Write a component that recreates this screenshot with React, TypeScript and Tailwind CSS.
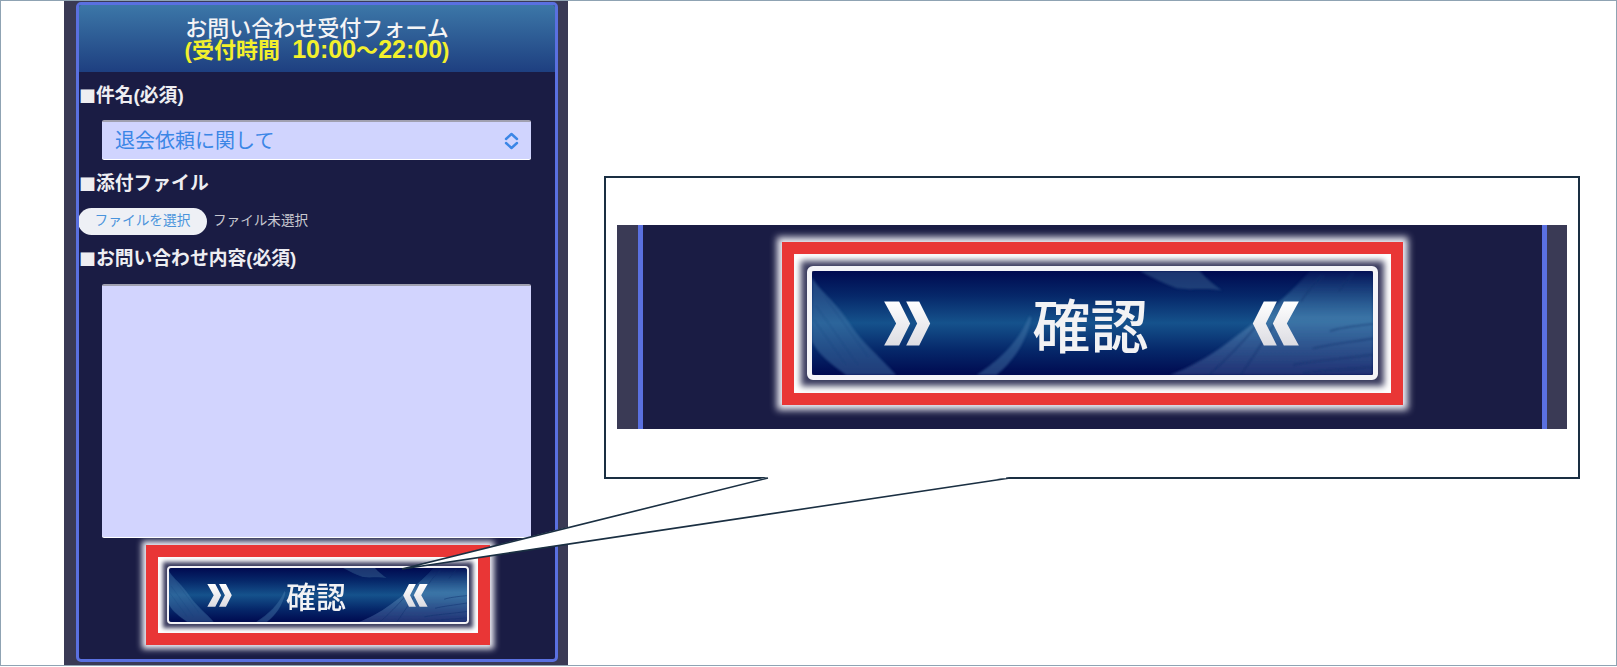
const FONT = "font-['Liberation_Sans','Noto_Sans_CJK_JP',sans-serif]";

function Feathers() {
  return (
    <svg className="absolute inset-0 h-full w-full" viewBox="0 0 560 102" preserveAspectRatio="none" aria-hidden="true">
      <defs>
        <linearGradient id="chev" x1="0" y1="0" x2="0" y2="1">
          <stop offset="0" stopColor="#ffffff" />
          <stop offset="1" stopColor="#dcdce2" />
        </linearGradient>
        <linearGradient id="plume" x1="0" y1="0" x2="0" y2="1">
          <stop offset="0" stopColor="#3f78a8" stopOpacity="0.08" />
          <stop offset="0.45" stopColor="#4d86b4" stopOpacity="0.7" />
          <stop offset="1" stopColor="#2c3f80" stopOpacity="0.75" />
        </linearGradient>
        <filter id="soft" x="-5%" y="-5%" width="110%" height="110%">
          <feGaussianBlur stdDeviation="0.8" />
        </filter>
      </defs>
      <g filter="url(#soft)">
        <path d="M0 6C8 20 24 30 38 52C50 70 70 86 84 102H34C20 92 6 82 0 69Z" fill="#4d80b0" opacity="0.42" />
        <path d="M4 34L46 92M2 48L34 92M12 24L56 84" stroke="#123f78" strokeWidth="1" opacity="0.35" fill="none" />
        <path d="M164 102C186 88 206 70 217 44L219 46C214 70 200 90 184 102Z" fill="#4d80b0" opacity="0.42" />
        <path d="M327 0H387C394 8 402 14 409 19C392 16 378 19 364 17C350 12 338 6 327 0Z" fill="#36608f" opacity="0.5" />
        <path d="M497 0C470 30 442 50 415 70C395 85 375 95 357 102H560V0Z" fill="url(#plume)" />
        <path d="M560 52C540 54 525 56 517 59M560 66C535 70 515 72 500 76M560 82C530 86 500 88 480 92M560 94C535 96 505 98 490 100M445 52C430 70 412 88 396 102M470 38C456 62 440 84 428 102M510 4C500 14 494 20 488 30M540 2C534 10 530 14 526 20" stroke="#10306c" strokeWidth="1.6" opacity="0.55" fill="none" />
      </g>
      <polygon points="72,30 87,30 98,51.5 87,73 72,73 84,51.5" fill="url(#chev)" />
      <polygon points="94,30 107,30 118,51.5 107,73 94,73 105,51.5" fill="url(#chev)" />
      <polygon points="486,30 471,30 460,51.5 471,73 486,73 474,51.5" fill="url(#chev)" />
      <polygon points="464,30 451,30 440,51.5 451,73 464,73 453,51.5" fill="url(#chev)" />
    </svg>
  );
}

function Face({ className }: { className: string }) {
  return (
    <div className={`relative flex items-center justify-center overflow-hidden rounded-[3px] bg-[linear-gradient(180deg,#000a50_0%,#06286a_24%,#15528c_50%,#06286a_76%,#000a50_100%)] font-medium text-[#f2f2f4] ${className}`}>
      <Feathers />
      <span className="relative -translate-x-[2px] font-['Noto_Sans_CJK_JP',sans-serif]">確認</span>
    </div>
  );
}

function Label({ children }: { children: string }) {
  return (
    <div className="flex items-center text-[18.8px] leading-[24px] font-bold text-[#eeeef2]">
      <span className="font-['Noto_Sans_CJK_JP',sans-serif] text-[17px] font-normal">■</span>
      <span>{children}</span>
    </div>
  );
}

function Chevrons() {
  return (
    <svg viewBox="0 0 15 20" className="h-[20px] w-[15px]" fill="none" stroke="#3b86e6" strokeWidth="2.4" strokeLinecap="round" strokeLinejoin="round" aria-hidden="true">
      <path d="M2 8L7.5 3L13 8" />
      <path d="M2 12L7.5 17L13 12" />
    </svg>
  );
}

function Panel() {
  return (
    <div className="ml-[64px] h-[664px] w-[504px] shrink-0 bg-[#3a3a55] px-[12px] pt-[1px]">
      <div className="h-[660px] w-[482px] overflow-hidden rounded-[5px] border-[3px] border-[#5a70e0] bg-[#1a1c44]">
        <div className="flex h-[67px] flex-col items-center bg-[linear-gradient(180deg,#3c77a8_0%,#1e3f80_100%)] pt-[13px] text-[22px] leading-[21px] font-medium">
          <div className="text-[#f4f4f6]">お問い合わせ受付フォーム</div>
          <div className="font-bold whitespace-pre text-[#f3f02c]">(受付時間  <span className="text-[25px]">10:00</span>～<span className="text-[25px]">22:00</span>)</div>
        </div>
        <div className="pt-[12px]">
          <Label>件名(必須)</Label>
          <div className="mt-[12px] ml-[23px] flex h-[39px] w-[429px] items-center justify-between rounded-[2px] border-t-[2px] border-[#a0a0b0] bg-[#d0d4fe] pr-[12px] pl-[13px] text-[20px] text-[#3b86e6] shadow-[0_1px_0_#fff]">
            <span>退会依頼に関して</span>
            <Chevrons />
          </div>
          <div className="mt-[13px]"><Label>添付ファイル</Label></div>
          <div className="mt-[12px] -ml-[1px] flex items-center">
            <div className="flex h-[27px] w-[129px] items-center justify-center rounded-full bg-[#eef0f5] text-[13.7px] text-[#4a94dc]">ファイルを選択</div>
            <span className="ml-[6px] text-[13.6px] text-[#c8c8d0]">ファイル未選択</span>
          </div>
          <div className="mt-[12px]"><Label>お問い合わせ内容(必須)</Label></div>
          <div className="mt-[13px] ml-[23px] h-[253px] w-[429px] rounded-[2px] border-t-[2px] border-[#a0a0b0] bg-[#d2d4fe] shadow-[0_1px_0_#fff]" />
          <div className="mt-[8px] ml-[67px] h-[100px] w-[344px] border-[12px] border-[#e93636] bg-[#3a3b5e] p-[9px] shadow-[0_0_6px_4px_#eeeef4,inset_0_0_4px_5px_#fff]">
            <div className="h-[58px] w-[302px] rounded-[4px] border-[2px] border-[#f2f2f6]">
              <Face className="h-full w-full text-[30px]" />
            </div>
          </div>
        </div>
      </div>
    </div>
  );
}

function Callout() {
  return (
    <div className="mt-[175px] ml-[36px] h-[303px] w-[976px] shrink-0 border-[2px] border-[#1a2f42] bg-white pt-[47px] pl-[11px]">
      <div className="flex h-[204px] w-[950px] bg-[#3a3a55]">
        <div className="ml-[21px] h-full w-[909px] border-x-[5px] border-[#5a70e0] bg-[#1a1c44] pt-[17px] pl-[139px]">
          <div className="h-[163px] w-[621px] border-[12px] border-[#e93636] bg-[#3a3b5e] pt-[12px] pl-[13px] shadow-[0_0_7px_5px_#eeeef4,inset_0_0_6px_7px_#fff]">
            <div className="h-[114px] w-[571px] rounded-[6px] border-[5px] border-[#f4f4f8]">
              <Face className="h-full w-full text-[58px]" />
            </div>
          </div>
        </div>
      </div>
    </div>
  );
}

export default function App() {
  return (
    <div className={`relative h-[667px] w-[1617px] overflow-hidden bg-white ${FONT}`}>
      <div className="flex h-[666px] w-[1617px] border border-[#8fa3b3]">
        <div className="-ml-[1px] flex">
          <Panel />
          <Callout />
        </div>
      </div>
      <svg className="absolute inset-0 h-[667px] w-[1617px]" viewBox="0 0 1617 667" aria-hidden="true">
        <polygon points="768,477 402,569 1010,477" fill="#fff" />
        <polyline points="768,478 402,569 1010,478" fill="none" stroke="#1a2f42" strokeWidth="1.6" />
        <line x1="771" y1="477" x2="1006" y2="477" stroke="#fff" strokeWidth="2.4" />
      </svg>
    </div>
  );
}
